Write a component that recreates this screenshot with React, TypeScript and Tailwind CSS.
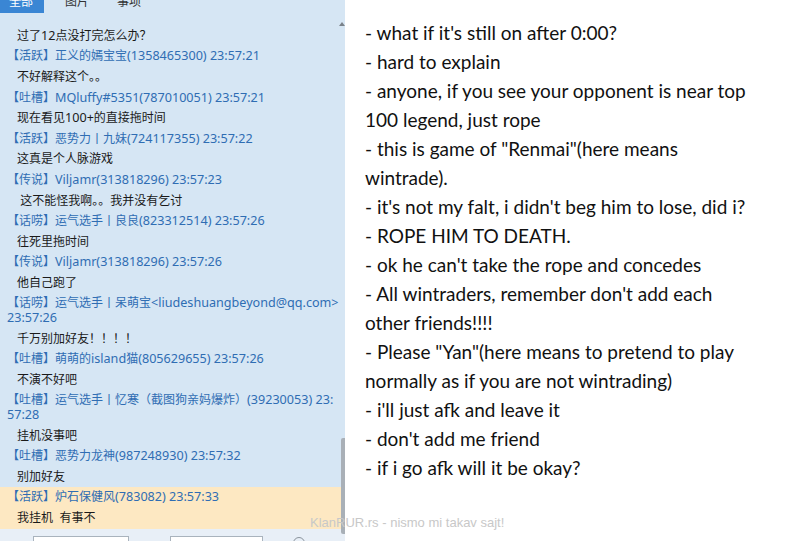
import React from "react";

type Item = { header: string[]; msg: string; hl?: boolean };

const first = "过了12点没打完怎么办？";
const items: Item[] = [
  { header: ["【活跃】正义的嫣宝宝(1358465300) 23:57:21"], msg: "不好解释这个。。" },
  { header: ["【吐槽】MQluffy#5351(787010051) 23:57:21"], msg: "现在看见100+的直接拖时间" },
  { header: ["【活跃】恶势力丨九妹(724117355) 23:57:22"], msg: "这真是个人脉游戏" },
  { header: ["【传说】Viljamr(313818296) 23:57:23"], msg: " 这不能怪我啊。。我并没有乞讨" },
  { header: ["【话唠】运气选手丨良良(823312514) 23:57:26"], msg: "往死里拖时间" },
  { header: ["【传说】Viljamr(313818296) 23:57:26"], msg: "他自己跑了" },
  { header: ["【话唠】运气选手丨呆萌宝<liudeshuangbeyond@qq.com>", "23:57:26"], msg: "千万别加好友！！！！" },
  { header: ["【吐槽】萌萌的island猫(805629655) 23:57:26"], msg: "不演不好吧" },
  { header: ["【吐槽】运气选手丨忆寒（截图狗亲妈爆炸）(39230053) 23:", "57:28"], msg: "挂机没事吧" },
  { header: ["【吐槽】恶势力龙神(987248930) 23:57:32"], msg: "别加好友" },
  { header: ["【活跃】炉石保健风(783082) 23:57:33"], msg: "我挂机  有事不", hl: true },
];

const lines = [
  "- what if it's still on after 0:00?",
  "- hard to explain",
  "- anyone, if you see your opponent is near top",
  "100 legend, just rope",
  "- this is game of \"Renmai\"(here means",
  "wintrade).",
  "- it's not my falt, i didn't beg him to lose, did i?",
  "- ROPE HIM TO DEATH.",
  "- ok he can't take the rope and concedes",
  "- All wintraders, remember don't add each",
  "other friends!!!!",
  "- Please \"Yan\"(here means to pretend to play",
  "normally as if you are not wintrading)",
  "- i'll just afk and leave it",
  "- don't add me friend",
  "- if i go afk will it be okay?",
];

const cjk = { fontFamily: '"Noto Sans", "Noto Sans CJK SC", sans-serif' };

function Mixed({ text }: { text: string }) {
  const parts = text.split(/([\x20-\x7e]+)/).filter((p) => p.length > 0);
  return (
    <>
      {parts.map((p, i) =>
        /^[\x20-\x7e]+$/.test(p) ? (
          <span key={i} className="text-[12.6px]">
            {p}
          </span>
        ) : (
          <span key={i}>{p}</span>
        )
      )}
    </>
  );
}

export default function App() {
  return (
    <div className="relative w-[790px] h-[541px] overflow-hidden bg-white flex">
      {/* Left chat panel */}
      <div className="relative w-[345px] h-full bg-[#d6e6f4] flex flex-col" style={cjk}>
        {/* tabs */}
        <div className="flex items-end h-[14px] text-[12px] overflow-hidden">
          <div className="w-[44px] h-[14px] bg-[#3a86d4] text-white flex items-end justify-center pr-[2px] leading-[20px]">
            <span className="mb-[1px]">全部</span>
          </div>
          <div className="ml-[21px] text-[#333] leading-[20px] mb-[1px]">图片</div>
          <div className="ml-[28px] text-[#333] leading-[20px] mb-[1px]">事项</div>
        </div>
        {/* messages */}
        <div className="flex-1 pt-[12.4px] text-[12px] pr-[4px]">
          <div className="py-[3px] leading-[14.6px] pl-[17px] text-[#1a1a1a] whitespace-pre">
            <Mixed text={first} />
          </div>
          {items.map((it, i) => (
            <div key={i} className={it.hl ? "bg-[#fde8c2]" : ""}>
              <div className="py-[3px] leading-[14.6px] pl-[7px] text-[#2f6db3] whitespace-pre">
                {it.header.map((h, j) => (
                  <div key={j}>
                    <Mixed text={h} />
                  </div>
                ))}
              </div>
              <div className="py-[3px] leading-[14.6px] pl-[17px] text-[#1a1a1a] whitespace-pre">
                <Mixed text={it.msg} />
              </div>
            </div>
          ))}
        </div>
        {/* bottom bar */}
        <div className="h-[13px] bg-[#e8eff7] flex items-end overflow-hidden">
          <div className="ml-[33px] w-[96px] h-[5px] bg-white border border-b-0 border-[#a9b3bd]" />
          <div className="ml-[41px] w-[93px] h-[5px] bg-white border border-b-0 border-[#a9b3bd]" />
          <div className="ml-[30px] w-[12px] h-[12px] -mb-[8px] rounded-full border border-[#8a939c]" />
        </div>
        {/* scrollbar */}
        <div className="absolute right-0 top-[22px] w-0 h-0 border-l-[3px] border-r-[3px] border-b-[4px] border-l-transparent border-r-transparent border-b-[#7a828a]" />
        <div className="absolute right-0 top-[438px] w-[4px] h-[96px] rounded-l-[2px] bg-[#a9b0b7]" />
      </div>

      {/* Right text panel */}
      <div className="flex-1 pl-[20px] pt-[18px] text-[19px] leading-[29px] text-[#111]" style={{ fontFamily: 'Lato, "Noto Sans", sans-serif' }}>
        {lines.map((l, i) => (
          <div key={i} className="whitespace-pre">{l}</div>
        ))}
      </div>

      {/* watermark */}
      <div
        className="absolute left-[310px] top-[515px] text-[13px] leading-[16px] text-[#c8c8c8]"
        style={{ fontFamily: '"Liberation Sans", Arial, sans-serif' }}
      >
        KlanRUR.rs - nismo mi takav sajt!
      </div>
    </div>
  );
}
